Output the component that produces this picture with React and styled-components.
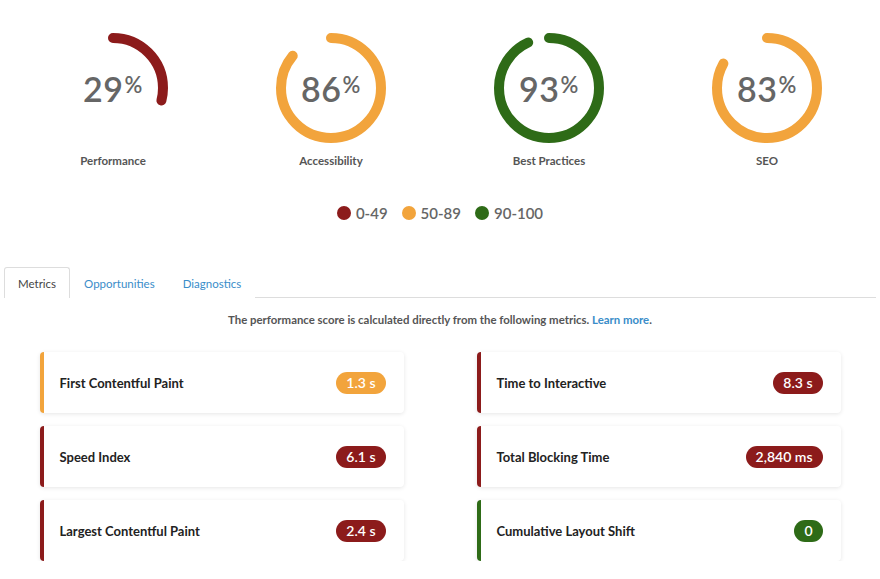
import React from "react";
import styled, { createGlobalStyle } from "styled-components";

const RED = "#8c1b1b";
const ORANGE = "#f2a43c";
const GREEN = "#2e6b17";
const BLUE = "#3a8dc9";

const Global = createGlobalStyle`
  html, body { margin: 0; padding: 0; background: #fff; }
  body { font-family: Lato, "Open Sans", sans-serif; }
`;

const Page = styled.div`
  width: 872px;
  padding: 0 4px;
`;

const GaugeRow = styled.div`
  display: grid;
  grid-template-columns: repeat(4, 1fr);
  padding-top: 28px;
`;

const GaugeCell = styled.div`
  display: flex;
  flex-direction: column;
  align-items: center;
`;

const Dial = styled.div`
  position: relative;
  width: 120px;
  height: 120px;
`;

const Score = styled.div`
  position: absolute;
  inset: 0;
  display: flex;
  align-items: center;
  justify-content: center;
  color: #666;
  font-size: 34px;
  font-weight: 600;
  letter-spacing: 0.5px;
  sup {
    font-size: 22px;
    font-weight: 600;
    vertical-align: 0;
    position: relative;
    top: -4px;
    margin-left: 1px;
  }
`;

const GaugeLabel = styled.div`
  margin-top: 6px;
  font-size: 11.5px;
  font-weight: 700;
  color: #555;
`;

const Legend = styled.div`
  display: flex;
  justify-content: center;
  gap: 14px;
  margin-top: 37px;
`;

const LegendItem = styled.div`
  display: flex;
  align-items: center;
  gap: 5px;
  font-size: 15px;
  color: #666;
  font-weight: 600;
`;

const Dot = styled.span`
  width: 14px;
  height: 14px;
  border-radius: 50%;
  background: ${(p) => p.$c};
`;

const Tabs = styled.div`
  display: flex;
  margin-top: 45px;
  border-bottom: 1px solid #ddd;
`;

const Tab = styled.div`
  height: 30px;
  padding: 0 13px;
  display: flex;
  align-items: center;
  font-size: 11.5px;
  font-weight: 400;
  color: ${(p) => (p.$active ? "#444" : BLUE)};
  border: 1px solid ${(p) => (p.$active ? "#ddd" : "transparent")};
  border-bottom: none;
  border-radius: 3px 3px 0 0;
  margin-bottom: -1px;
  background: #fff;
`;

const Intro = styled.p`
  margin: 15px 0 0;
  text-align: center;
  font-size: 11.4px;
  font-weight: 700;
  color: #555;
  a { color: ${BLUE}; text-decoration: none; }
`;

const Grid = styled.div`
  display: grid;
  grid-template-columns: 364px 364px;
  column-gap: 73px;
  row-gap: 13px;
  justify-content: center;
  margin-top: 26px;
`;

const Card = styled.div`
  height: 61px;
  display: flex;
  align-items: center;
  justify-content: space-between;
  padding: 0 18px 0 16px;
  border-left: 4px solid ${(p) => p.$c};
  border-radius: 4px;
  background: #fff;
  box-shadow: 0 1px 4px rgba(0, 0, 0, 0.1);
`;

const CardTitle = styled.span`
  font-size: 13px;
  font-weight: 700;
  color: #222;
`;

const Badge = styled.span`
  height: 22px;
  padding: 0 10px;
  border-radius: 11px;
  display: flex;
  align-items: center;
  background: ${(p) => p.$c};
  color: #fff;
  font-size: 14px;
  font-weight: 600;
`;

const Gauge = ({ value, color, label }) => {
  const r = 50;
  const c = 2 * Math.PI * r;
  return (
    <GaugeCell>
      <Dial>
        <svg width="120" height="120" viewBox="0 0 120 120">
          <circle
            cx="60"
            cy="60"
            r={r}
            fill="none"
            stroke={color}
            strokeWidth="10"
            strokeLinecap="round"
            strokeDasharray={`${(c * value) / 100} ${c}`}
            transform="rotate(-90 60 60)"
          />
        </svg>
        <Score>
          {value}
          <sup>%</sup>
        </Score>
      </Dial>
      <GaugeLabel>{label}</GaugeLabel>
    </GaugeCell>
  );
};

const metrics = [
  ["First Contentful Paint", "1.3 s", ORANGE],
  ["Time to Interactive", "8.3 s", RED],
  ["Speed Index", "6.1 s", RED],
  ["Total Blocking Time", "2,840 ms", RED],
  ["Largest Contentful Paint", "2.4 s", RED],
  ["Cumulative Layout Shift", "0", GREEN],
];

export default function App() {
  return (
    <Page>
      <Global />
      <GaugeRow>
        <Gauge value={29} color={RED} label="Performance" />
        <Gauge value={86} color={ORANGE} label="Accessibility" />
        <Gauge value={93} color={GREEN} label="Best Practices" />
        <Gauge value={83} color={ORANGE} label="SEO" />
      </GaugeRow>
      <Legend>
        <LegendItem><Dot $c={RED} />0-49</LegendItem>
        <LegendItem><Dot $c={ORANGE} />50-89</LegendItem>
        <LegendItem><Dot $c={GREEN} />90-100</LegendItem>
      </Legend>
      <Tabs>
        <Tab $active>Metrics</Tab>
        <Tab>Opportunities</Tab>
        <Tab>Diagnostics</Tab>
      </Tabs>
      <Intro>
        The performance score is calculated directly from the following metrics. <a href="#">Learn more</a>.
      </Intro>
      <Grid>
        {metrics.map(([t, v, c]) => (
          <Card key={t} $c={c}>
            <CardTitle>{t}</CardTitle>
            <Badge $c={c}>{v}</Badge>
          </Card>
        ))}
      </Grid>
    </Page>
  );
}
